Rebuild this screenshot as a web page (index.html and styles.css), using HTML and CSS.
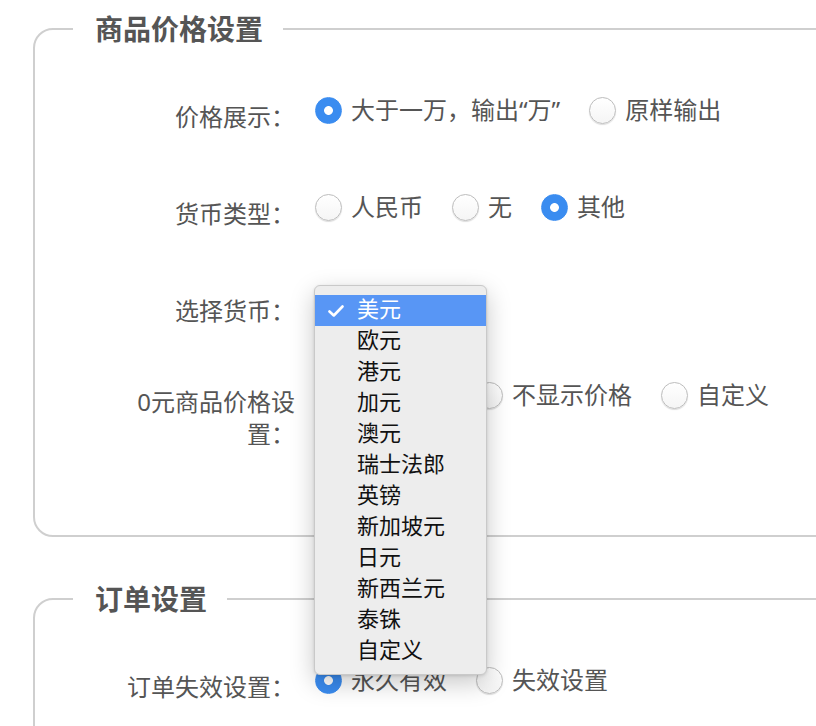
FILE: index.html
```html
<!DOCTYPE html>
<html lang="zh-CN">
<head>
    <meta charset="UTF-8">
    <meta name="viewport" content="width=device-width, initial-scale=1.0">
    <title>商品设置</title>
    <link rel="stylesheet" href="styles.css">
</head>
<body>
    <div class="page">
        <!-- 商品价格设置 -->
        <fieldset class="group">
            <legend class="group-title">商品价格设置</legend>

            <div class="form-row">
                <div class="form-label">价格展示：</div>
                <div class="form-field">
                    <label class="radio"><input type="radio" name="price-show" checked><span>大于一万，输出“万”</span></label>
                    <label class="radio"><input type="radio" name="price-show"><span>原样输出</span></label>
                </div>
            </div>

            <div class="form-row">
                <div class="form-label">货币类型：</div>
                <div class="form-field">
                    <label class="radio"><input type="radio" name="currency-type"><span>人民币</span></label>
                    <label class="radio"><input type="radio" name="currency-type"><span>无</span></label>
                    <label class="radio"><input type="radio" name="currency-type" checked><span>其他</span></label>
                </div>
            </div>

            <div class="form-row form-row-select">
                <div class="form-label">选择货币：</div>
                <div class="form-field">
                    <div class="select">
                        <span class="select-value">美元</span>
                        <!-- open popup menu -->
                        <ul class="select-menu">
                            <li class="select-item selected">
                                <svg class="select-check" width="16" height="12" viewBox="0 0 16 12"><path d="M1.5 6.5 L5.8 10.5 L14.5 1.5" fill="none" stroke="#fff" stroke-width="2.6" stroke-linecap="round" stroke-linejoin="round"/></svg>
                                美元
                            </li>
                            <li class="select-item">欧元</li>
                            <li class="select-item">港元</li>
                            <li class="select-item">加元</li>
                            <li class="select-item">澳元</li>
                            <li class="select-item">瑞士法郎</li>
                            <li class="select-item">英镑</li>
                            <li class="select-item">新加坡元</li>
                            <li class="select-item">日元</li>
                            <li class="select-item">新西兰元</li>
                            <li class="select-item">泰铢</li>
                            <li class="select-item">自定义</li>
                        </ul>
                    </div>
                </div>
            </div>

            <div class="form-row">
                <div class="form-label">0元商品价格设置：</div>
                <div class="form-field">
                    <label class="radio"><input type="radio" name="zero-price" checked><span>显示价格</span></label>
                    <label class="radio"><input type="radio" name="zero-price"><span>不显示价格</span></label>
                    <label class="radio"><input type="radio" name="zero-price"><span>自定义</span></label>
                </div>
            </div>
        </fieldset>

        <!-- 订单设置 -->
        <fieldset class="group">
            <legend class="group-title">订单设置</legend>

            <div class="form-row">
                <div class="form-label">订单失效设置：</div>
                <div class="form-field">
                    <label class="radio"><input type="radio" name="order-expire" checked><span>永久有效</span></label>
                    <label class="radio"><input type="radio" name="order-expire"><span>失效设置</span></label>
                </div>
            </div>
        </fieldset>
    </div>
</body>
</html>
```

FILE: styles.css
```css
* {
    box-sizing: border-box;
}

body {
    margin: 0;
    overflow: hidden;
    background: #fff;
    color: #555;
    font-family: "Noto Sans", "Noto Sans CJK SC", sans-serif;
    font-size: 24px;
    line-height: 32px;
}

.page {
    padding: 13px 0 0 33px;
}

.group {
    margin: 0 -60px 0 0;
    padding: 0 0 85px 0;
    min-width: 0;
    border: 2px solid #cfcfcf;
    border-radius: 20px;
}

.group + .group {
    margin-top: 46px;
    height: 300px;
}

.group-title {
    margin-left: 38px;
    padding: 0 20px 0 22px;
    font-size: 28px;
    font-weight: bold;
    line-height: 32px;
    color: #555;
}

.form-row {
    display: flex;
    align-items: flex-start;
    margin-top: 58px;
}

.form-row:first-of-type {
    margin-top: 49px;
}

.form-row-select {
    margin-bottom: -6px;
}

.form-label {
    width: 170px;
    margin-left: 90px;
    margin-right: 20px;
    padding-top: 7px;
    text-align: right;
    flex-shrink: 0;
}

.form-field {
    display: flex;
    align-items: center;
    flex-wrap: nowrap;
}

/* Radios */
.radio {
    display: flex;
    align-items: center;
    margin-right: 29px;
    white-space: nowrap;
    cursor: pointer;
}

.radio input {
    appearance: none;
    -webkit-appearance: none;
    width: 27px;
    height: 27px;
    margin: 0 9px 0 0;
    border: 1px solid #bdbdbd;
    border-radius: 50%;
    background: linear-gradient(#fff, #f5f5f5);
    box-shadow: 0 1px 1px rgba(0, 0, 0, 0.14);
}

.radio input:checked {
    border-color: #3a8cf0;
    background: radial-gradient(circle, #fff 0, #fff 4px, #3a8cf0 4.8px);
    box-shadow: none;
}

/* Select with open popup */
.select {
    position: relative;
    width: 150px;
    height: 32px;
    margin-top: 4px;
    padding-left: 10px;
    border: 1px solid #ccc;
    border-radius: 4px;
    color: #333;
}

.select-menu {
    position: absolute;
    left: -2px;
    top: -8px;
    z-index: 10;
    width: 173px;
    margin: 0;
    padding: 9px 0 7px;
    list-style: none;
    background: #ededed;
    border: 1px solid #c9c9c9;
    border-radius: 6px;
    box-shadow: 0 8px 24px rgba(0, 0, 0, 0.22), 0 1px 3px rgba(0, 0, 0, 0.12);
}

.select-item {
    position: relative;
    height: 31px;
    padding-left: 42px;
    font-size: 22px;
    line-height: 27px;
    color: #111;
}

.select-item.selected {
    background: #5896f5;
    color: #fff;
}

.select-check {
    position: absolute;
    left: 13px;
    top: 10px;
}
```
